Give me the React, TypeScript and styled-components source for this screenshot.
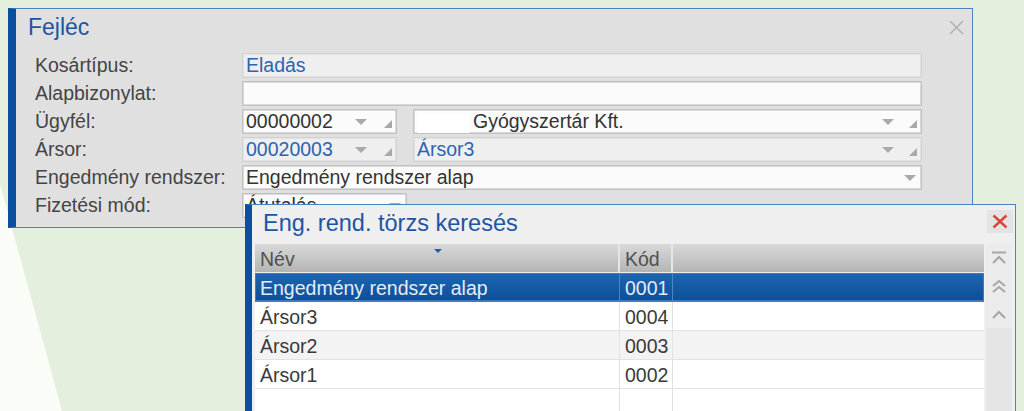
import React from 'react';
import styled, { createGlobalStyle, css } from 'styled-components';

const GlobalStyle = createGlobalStyle`
  html, body {
    margin: 0;
    padding: 0;
    overflow: hidden;
    font-family: "Liberation Sans", Arial, sans-serif;
  }
`;

const Stage = styled.div`
  position: relative;
  width: 1024px;
  height: 411px;
  overflow: hidden;
  box-sizing: border-box;
  padding: 8px 0 0 8px;
  background: #e4f0dd;
  &::before {
    content: '';
    position: absolute;
    inset: 0;
    background: #f9fcf7;
    clip-path: polygon(0 184px, 62px 411px, 0 411px);
  }
`;

const Window = styled.div`
  position: relative;
  z-index: 1;
  width: 965px;
  height: 220px;
  box-sizing: border-box;
  background: #e0e0e0;
  border-left: 8px solid #0b4f9f;
  border-top: 1px solid #4a82c4;
  border-right: 1px solid #4a82c4;
  border-bottom: 1px solid #4a82c4;
  padding: 5px 8px 0 12px;
`;

const TitleBar = styled.div`
  display: flex;
  justify-content: space-between;
  align-items: center;
  height: 26px;
`;

const Title = styled.h1<{ $size: number }>`
  margin: 0;
  font-weight: 400;
  font-size: ${(p) => p.$size}px;
  line-height: 28px;
  color: #1d55a2;
`;

const Form = styled.div`
  display: grid;
  grid-template-columns: 207px 680px;
  grid-auto-rows: 25px;
  row-gap: 3px;
  margin-top: 13px;
  padding-left: 7px;
`;

const Label = styled.div`
  font-size: 19.5px;
  line-height: 25px;
  color: #444;
  white-space: nowrap;
`;

const Pair = styled.div`
  display: flex;
  gap: 16px;
`;

const Field = styled.div<{ $tone?: 'disabled' | 'plain'; $width?: number; $blue?: boolean }>`
  display: flex;
  align-items: center;
  box-sizing: border-box;
  height: 25px;
  ${(p) => (p.$width ? `width: ${p.$width}px; flex: none;` : 'flex: 1;')}
  padding: 0 4px 0 3px;
  border: 1px solid ${(p) => (p.$tone === 'disabled' ? '#d2d2d2' : '#c2c2c2')};
  box-shadow: inset 0 0 0 1px ${(p) => (p.$tone === 'disabled' ? '#e2e2e2' : '#dadada')};
  background: ${(p) => (p.$tone === 'disabled' ? '#efefef' : '#fbfbfb')};
  font-size: 19.5px;
  line-height: 23px;
  color: ${(p) => (p.$blue ? '#2b64b2' : '#333')};
  overflow: hidden;
`;

const Value = styled.span`
  flex: 1;
  white-space: nowrap;
  overflow: hidden;
`;

const Arrow = styled.span<{ $gap: number }>`
  flex: none;
  width: 0;
  height: 0;
  border-left: 6px solid transparent;
  border-right: 6px solid transparent;
  border-top: 6px solid #a9a9a9;
  margin-right: ${(p) => p.$gap}px;
`;

const Grip = styled.span`
  flex: none;
  align-self: flex-end;
  width: 8px;
  height: 8px;
  margin-bottom: 5px;
  background: #a9a9a9;
  clip-path: polygon(100% 0, 100% 100%, 0 100%);
`;

const Redacted = styled.span`
  display: inline-block;
  width: 52px;
  height: 20px;
  margin-right: 4px;
  background: #ffffff;
  vertical-align: middle;
`;

const Popup = styled.div`
  position: absolute;
  z-index: 2;
  left: 245px;
  top: 204px;
  width: 771px;
  height: 230px;
  box-sizing: border-box;
  background: #efefef;
  border-left: 7px solid #0b4f9f;
  border-top: 1px solid #4a82c4;
  border-right: 1px solid #4a82c4;
`;

const PopupHead = styled.div`
  display: flex;
  justify-content: space-between;
  align-items: flex-start;
  height: 39px;
  box-sizing: border-box;
  padding: 4px 2px 0 11px;
`;

const CloseBtn = styled.div`
  display: flex;
  align-items: center;
  justify-content: center;
  width: 26px;
  height: 23px;
  margin-top: 1px;
  background: #e3e3e3;
`;

const PopupBody = styled.div`
  display: flex;
  gap: 2px;
  padding: 0 3px;
`;

const Table = styled.div`
  width: 729px;
  background: #fff;
`;

const columns = css`
  display: grid;
  grid-template-columns: 365px 53px 1fr;
`;

const HeadRow = styled.div`
  ${columns};
  height: 29px;
  box-sizing: border-box;
  background: linear-gradient(#d9d9d9, #b4b4b4);
  border-bottom: 1px solid #ececec;
`;

const HeadCell = styled.div`
  position: relative;
  padding: 2px 0 0 5px;
  font-size: 19.5px;
  line-height: 26px;
  color: #505050;
  border-right: 2px solid #e6e6e6;
  &:last-child {
    border-right: none;
  }
`;

const SortMark = styled.span`
  position: absolute;
  top: 5px;
  left: 179px;
  width: 0;
  height: 0;
  border-left: 4px solid transparent;
  border-right: 4px solid transparent;
  border-top: 4px solid #1f5fae;
`;

const Row = styled.div<{ $selected?: boolean; $alt?: boolean }>`
  ${columns};
  height: 29px;
  box-sizing: border-box;
  border-bottom: 1px solid #e2e2e2;
  background: ${(p) => (p.$selected ? 'linear-gradient(#2065ae, #0b4f9b)' : p.$alt ? '#f3f3f3' : '#ffffff')};
  ${(p) => p.$selected && 'box-shadow: inset 0 0 0 1px #3b7cc2; border-bottom-color: #3b7cc2;'}
`;

const Cell = styled.div<{ $selected?: boolean }>`
  padding: 2px 0 0 5px;
  font-size: 19.5px;
  line-height: 26px;
  white-space: nowrap;
  color: ${(p) => (p.$selected ? '#e4ecf6' : '#3a3a3a')};
  border-right: 1px solid ${(p) => (p.$selected ? '#4a86c5' : '#e2e2e2')};
  &:last-child {
    border-right: none;
  }
`;

const ScrollCol = styled.div`
  display: flex;
  flex-direction: column;
  width: 26px;
  height: 200px;
  background: #e5e5e5;
`;

const ScrollBtn = styled.div`
  display: flex;
  align-items: center;
  justify-content: center;
  height: 28px;
  background: #ebebeb;
`;

const grey = '#a6a6a6';

const ScrollTopIcon = () => (
  <svg width="16" height="14" viewBox="0 0 16 14" fill="none" stroke={grey} strokeWidth="2">
    <line x1="1" y1="1.5" x2="15" y2="1.5" />
    <polyline points="2,12 8,6 14,12" />
  </svg>
);

const ScrollPageIcon = () => (
  <svg width="16" height="14" viewBox="0 0 16 14" fill="none" stroke={grey} strokeWidth="2">
    <polyline points="2,7 8,2 14,7" />
    <polyline points="2,13 8,8 14,13" />
  </svg>
);

const ScrollUpIcon = () => (
  <svg width="16" height="9" viewBox="0 0 16 9" fill="none" stroke={grey} strokeWidth="2">
    <polyline points="2,8 8,2 14,8" />
  </svg>
);

type ComboProps = {
  value?: React.ReactNode;
  width?: number;
  tone?: 'disabled' | 'plain';
  blue?: boolean;
  grip?: boolean;
  arrowGap: number;
};

function Combo({ value, width, tone, blue, grip = true, arrowGap }: ComboProps) {
  return (
    <Field $width={width} $tone={tone} $blue={blue}>
      <Value>{value}</Value>
      <Arrow $gap={arrowGap} />
      {grip && <Grip />}
    </Field>
  );
}

const rows = [
  { name: 'Engedmény rendszer alap', code: '0001' },
  { name: 'Ársor3', code: '0004' },
  { name: 'Ársor2', code: '0003' },
  { name: 'Ársor1', code: '0002' },
  { name: '', code: '' },
];

export default function App() {
  return (
    <>
      <GlobalStyle />
      <Stage>
        <Window>
          <TitleBar>
            <Title $size={23}>Fejléc</Title>
            <svg width="15" height="15" viewBox="0 0 15 15" stroke="#b2b2b2" strokeWidth="1.6">
              <line x1="1" y1="1" x2="14" y2="14" />
              <line x1="14" y1="1" x2="1" y2="14" />
            </svg>
          </TitleBar>
          <Form>
            <Label>Kosártípus:</Label>
            <Field $tone="disabled" $blue>
              <Value>Eladás</Value>
            </Field>

            <Label>Alapbizonylat:</Label>
            <Field />

            <Label>Ügyfél:</Label>
            <Pair>
              <Combo width={155} value="00000002" arrowGap={17} />
              <Combo
                value={
                  <>
                    <Redacted />
                    Gyógyszertár Kft.
                  </>
                }
                arrowGap={15}
              />
            </Pair>

            <Label>Ársor:</Label>
            <Pair>
              <Combo width={155} tone="disabled" blue value="00020003" arrowGap={17} />
              <Combo tone="disabled" blue value="Ársor3" arrowGap={15} />
            </Pair>

            <Label>Engedmény rendszer:</Label>
            <Combo value="Engedmény rendszer alap" grip={false} arrowGap={1} />

            <Label>Fizetési mód:</Label>
            <Combo width={165} value="Átutalás" grip={false} arrowGap={1} />
          </Form>
        </Window>

        <Popup>
          <PopupHead>
            <Title $size={23.5}>Eng. rend. törzs keresés</Title>
            <CloseBtn>
              <svg width="16" height="15" viewBox="0 0 16 15" stroke="#d9473a" strokeWidth="2.4">
                <line x1="1.5" y1="1.5" x2="14.5" y2="13.5" />
                <line x1="14.5" y1="1.5" x2="1.5" y2="13.5" />
              </svg>
            </CloseBtn>
          </PopupHead>
          <PopupBody>
            <Table>
              <HeadRow>
                <HeadCell>
                  Név
                  <SortMark />
                </HeadCell>
                <HeadCell>Kód</HeadCell>
                <HeadCell />
              </HeadRow>
              {rows.map((r, i) => (
                <Row key={i} $selected={i === 0} $alt={i === 2}>
                  <Cell $selected={i === 0}>{r.name}</Cell>
                  <Cell $selected={i === 0}>{r.code}</Cell>
                  <Cell $selected={i === 0} />
                </Row>
              ))}
            </Table>
            <ScrollCol>
              <ScrollBtn>
                <ScrollTopIcon />
              </ScrollBtn>
              <ScrollBtn>
                <ScrollPageIcon />
              </ScrollBtn>
              <ScrollBtn>
                <ScrollUpIcon />
              </ScrollBtn>
            </ScrollCol>
          </PopupBody>
        </Popup>
      </Stage>
    </>
  );
}
